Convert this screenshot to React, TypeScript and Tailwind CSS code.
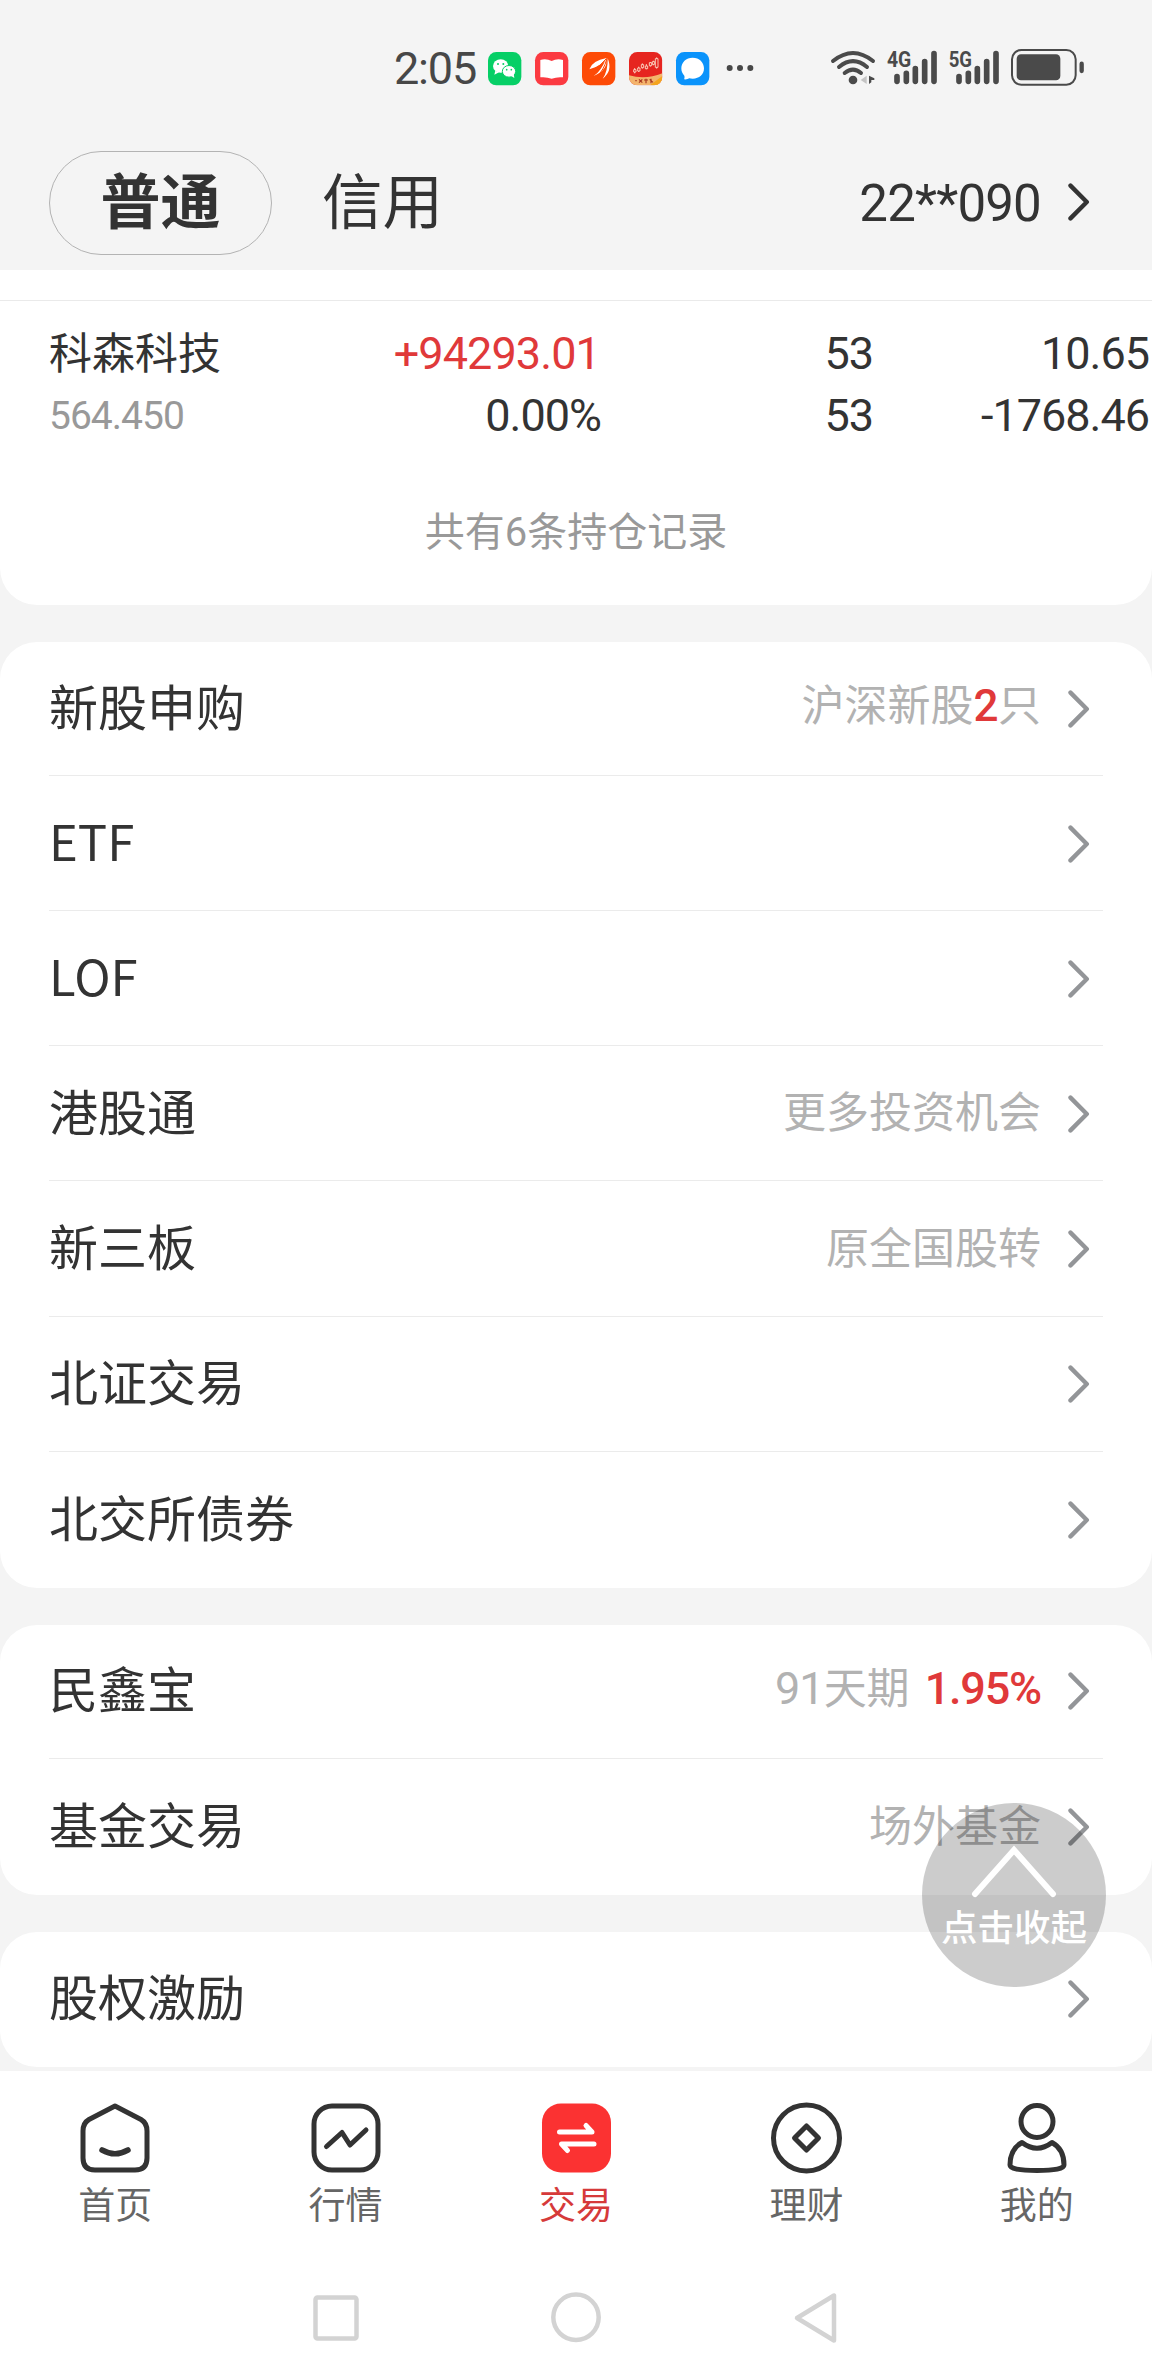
import type { ReactNode } from "react";

type MenuRow = {
    label: string;
    hint?: ReactNode;
};

const holding = {
    name: "科森科技",
    value: "564.450",
    cells: [
        { top: "+94293.01", bottom: "0.00%", width: "w-[300px]", topColor: "text-[#e0393a] tracking-[-0.9px] pr-px" },
        { top: "53", bottom: "53", width: "w-[272px]", topColor: "" },
        { top: "10.65", bottom: "-1768.46", width: "w-[276px]", topColor: "" },
    ],
};

const menuGroups: MenuRow[][] = [
    [
        { label: "新股申购", hint: <>沪深新股<span className="font-['Roboto'] text-[44px] font-medium leading-none tracking-[-0.5px] text-[#e0393a]">2</span>只</> },
        { label: "ETF" },
        { label: "LOF" },
        { label: "港股通", hint: "更多投资机会" },
        { label: "新三板", hint: "原全国股转" },
        { label: "北证交易" },
        { label: "北交所债券" },
    ],
    [
        {
            label: "民鑫宝",
            hint: (
                <>
                    <span className="font-['Roboto'] text-[45px] leading-none tracking-[-1px]">91</span>天期
                    <span className="ml-[15px] font-['Roboto'] text-[45px] font-medium leading-none tracking-[-1.2px] text-[#e0393a]">1.95%</span>
                </>
            ),
        },
        { label: "基金交易", hint: "场外基金" },
    ],
    [{ label: "股权激励" }],
];

const Chevron = ({ color }: { color: string }) => (
    <svg width="22" height="38" viewBox="0 0 22 38" fill="none" stroke={color} strokeWidth="4.4" strokeLinecap="round" strokeLinejoin="round">
        <path d="M2.5 2.6 18.8 19 2.5 35.4" />
    </svg>
);

const AppIcons = () => (
    <svg width="266" height="34" viewBox="0 0 798 102">
        {/* 微信 */}
        <rect x="0" y="0" width="100" height="100" rx="25" fill="#06cf66" />
        <ellipse cx="38" cy="42" rx="23" ry="20" fill="#fff" />
        <path d="M22 56l-3 12 14-7z" fill="#fff" />
        <ellipse cx="63" cy="58" rx="20" ry="17.500" fill="#fff" stroke="#06cf66" strokeWidth="3" />
        <path d="M70 72l9 6-2-12z" fill="#fff" />
        <circle cx="30" cy="36" r="3" fill="#06cf66" />
        <circle cx="46" cy="36" r="3" fill="#06cf66" />
        <circle cx="56" cy="53" r="2.500" fill="#06cf66" />
        <circle cx="70" cy="53" r="2.500" fill="#06cf66" />
        {/* 阅读 */}
        <rect x="141" y="0" width="100" height="100" rx="25" fill="#fb3a41" />
        <path d="M157 24q18-5 34 3 16-8 34-3v52q-18-2-34 4-16-6-34-4z" fill="#fff" />
        {/* 证券 */}
        <rect x="282" y="0" width="100" height="100" rx="25" fill="#fd4a06" />
        <path d="M304 52q8-26 52-34-10 22-52 34z" fill="#fff" />
        <path d="M317 72q22-14 37-52 8 32-37 52z" fill="#fff" />
        <path d="M344 80q16-22 15-61 16 38-15 61z" fill="#fff" />
        <path d="M309 56q28-12 46-36M326 74q22-20 30-52" stroke="#fd4a06" strokeWidth="3" fill="none" />
        {/* 行情 */}
        <clipPath id="quotes"><rect x="423" y="0" width="100" height="100" rx="25" /></clipPath>
        <g clipPath="url(#quotes)">
            <rect x="423" y="0" width="100" height="100" fill="#e6251f" />
            <path d="M423 70q50 14 100-6v36H423z" fill="#f3b46c" />
            <path d="M486 100l37-28v28z" fill="#f4a51e" />
            <path d="M440 48v16M452 44v16M463 34v16M475 36v16M487 30v14M496 26v14M506 16v34" stroke="#fde3cf" strokeWidth="2.500" />
            <path d="M437 53h7v7h-7zM449 48h7v9h-7zM460 38h7v9h-7zM472 42h7v8h-7zM484 32h7v9h-7zM493 29h7v8h-7zM502 20h8v26h-8z" fill="#e6251f" stroke="#fde3cf" strokeWidth="2.500" />
            <path d="M442 86h4M453 82l10 10M463 82l-10 10M468 84h12M474 80v14M485 82l10 9M489 80v14" stroke="#a8351e" strokeWidth="3.500" />
        </g>
        {/* 信息 */}
        <rect x="564" y="0" width="100" height="100" rx="25" fill="#0a93fb" />
        <path d="M614 17c20 0 34 14 34 32s-14 31-34 31c-4 0-7 0-10-1-5 3-10 4-16 3 2-4 2-7 1-11-6-6-9-13-9-22 0-18 14-32 34-32z" fill="#fff" />
        <g fill="#474747">
            <circle cx="725" cy="48" r="9" />
            <circle cx="756" cy="48" r="9" />
            <circle cx="787" cy="48" r="9" />
        </g>
    </svg>
);

const SignalIcons = () => (
    <svg width="300" height="80" viewBox="0 0 900 240" fill="none" stroke="#4a4a4a" strokeLinecap="round">
        <path d="M69 93Q129 45 189 93M87 111Q129 76 171 111M104 129Q129 109 153 129" strokeWidth="12" />
        <circle cx="129" cy="150" r="13" fill="#4a4a4a" stroke="none" />
        <path d="M170 137v25l-18-12z" fill="#c4c4c4" stroke="none" />
        <path d="M177 137v25l7-5v-7h9v-5z" fill="#4a4a4a" stroke="none" />
        <text x="231" y="111" textLength="73" lengthAdjust="spacingAndGlyphs" fill="#4a4a4a" stroke="none" className="font-['Roboto'] text-[68px] font-bold">4G</text>
        <path d="M261 140v14M289 130v24M316 116v38M344 95v59M372 71v83" strokeWidth="17" />
        <text x="416" y="111" textLength="70" lengthAdjust="spacingAndGlyphs" fill="#4a4a4a" stroke="none" className="font-['Roboto'] text-[68px] font-bold">5G</text>
        <path d="M447 140v14M475 130v24M502 116v38M530 95v59M558 71v83" strokeWidth="17" />
        <rect x="606" y="60" width="191" height="104" rx="28" strokeWidth="6" />
        <rect x="620" y="73" width="131" height="78" rx="13" fill="#4a4a4a" stroke="none" />
        <path d="M815 101v22" strokeWidth="13" />
    </svg>
);

const StatusBar = () => (
    <div className="flex h-[136px] items-center pl-[394px] text-[#474747]">
        <span className="w-[94px] pt-px font-['Roboto'] text-[45px] leading-none tracking-[-1.2px]">2:05</span>
        <div className="pt-[2px]">
            <AppIcons />
        </div>
        <div className="ml-auto mr-[42px] mt-1">
            <SignalIcons />
        </div>
    </div>
);

const AccountHeader = () => (
    <div className="flex h-[134px] items-start pl-[49px] pr-[62px] pt-[15px]">
        <div className="flex h-[104px] w-[223px] items-center justify-center rounded-full border border-[#b3b3b3] pb-2.5 text-[60px] font-bold leading-none">
            普通
        </div>
        <div className="ml-[50px] flex h-[104px] items-center pb-2.5 text-[60.5px] leading-none">信用</div>
        <div className="ml-auto flex h-[101px] items-center gap-[27px]">
            <span className="pt-[3px] font-['Roboto'] text-[51px] leading-none tracking-[-0.8px]">22**090</span>
            <Chevron color="#333333" />
        </div>
    </div>
);

const Holdings = () => (
    <section className="h-[335px] overflow-hidden rounded-b-[37px] bg-white pt-[30px]">
        <div className="flex h-[166px] border-t border-[#eaeaea] pl-[49px] pt-[22px]">
            <div className="w-[252px]">
                <div className="flex h-[62px] items-center pb-2 text-[43px] leading-none">{holding.name}</div>
                <div className="flex h-[62px] items-center pt-px font-['Roboto'] text-[39px] tracking-[-1px] text-[#999999]">{holding.value}</div>
            </div>
            {holding.cells.map((cell) => (
                <div key={cell.top} className={`${cell.width} shrink-0 text-right font-['Roboto'] text-[45px] leading-[62px] tracking-[-1px]`}>
                    <div className={cell.topColor}>{cell.top}</div>
                    <div>{cell.bottom}</div>
                </div>
            ))}
        </div>
        <p className="pt-[33px] text-center text-[40px] leading-[60px] text-[#999999]">
            共有<span className="font-['Roboto']">6</span>条持仓记录
        </p>
    </section>
);

const MenuCard = ({ rows }: { rows: MenuRow[] }) => (
    <section className="rounded-[37px] bg-white px-[49px]">
        {rows.map((row, index) => (
            <div key={row.label} className="h-[135.15px]">
                <div className={`flex h-[134px] items-center pr-[13px] ${index < rows.length - 1 ? "border-b border-[#ebebeb]" : ""}`}>
                    <span className="pb-[9px] text-[49px] leading-none">{row.label}</span>
                    <span className="ml-auto flex items-baseline whitespace-pre pb-2 text-[43px] leading-none text-[#b2b2b2]">{row.hint}</span>
                    <span className="ml-[27px]">
                        <Chevron color="#939598" />
                    </span>
                </div>
            </div>
        ))}
    </section>
);

const tabs = [
    {
        label: "首页",
        icon: (
            <>
                <path d="M36 4 62 17.500Q68 21 68 29V56Q68 68 56 68H16Q4 68 4 56V29Q4 21 10 17.500Z" />
                <path d="M23 48q13 7.500 26 0" strokeWidth="5.500" />
            </>
        ),
    },
    {
        label: "行情",
        icon: (
            <>
                <rect x="4" y="4" width="64" height="64" rx="18" />
                <path d="M16.500 44.500 32 30.500l8 12.500 16-15" />
            </>
        ),
    },
    {
        label: "交易",
        active: true,
        icon: (
            <>
                <rect x="2" y="1.500" width="69" height="69" rx="19" fill="#fb3232" stroke="none" />
                <path d="M19.500 30H52L46 23.500M54 42H21.500L27.500 48.500" stroke="#fff" />
            </>
        ),
    },
    {
        label: "理财",
        icon: (
            <>
                <circle cx="36.500" cy="36" r="33" />
                <path d="M36.500 24 48.500 36 36.500 48 24.500 36Z" />
            </>
        ),
    },
    {
        label: "我的",
        icon: (
            <>
                <circle cx="36" cy="19.500" r="16" />
                <path d="M21 40.500Q9 47 9 63 9 68.500 36 68.500T63 63Q63 47 51 40.500 36 52 21 40.500Z" />
            </>
        ),
    },
];

const TabBar = () => (
    <nav className="flex h-[189px] bg-white pt-[31px]">
        {tabs.map((tab) => (
            <div key={tab.label} className="flex flex-1 flex-col items-center">
                <svg width="72" height="72" viewBox="0 0 72 72" fill="none" stroke="#333333" strokeWidth="5" strokeLinecap="round" strokeLinejoin="round">
                    {tab.icon}
                </svg>
                <span className={`mt-2.5 text-[37px] leading-[38px] ${tab.active ? "text-[#d63a3a]" : "text-[#666666]"}`}>{tab.label}</span>
            </div>
        ))}
    </nav>
);

const SystemNav = () => (
    <div className="flex h-[116px] items-start justify-center gap-[190px] bg-white pt-8">
        <svg width="50" height="52" viewBox="0 0 50 52" fill="none" stroke="#d3d3d3" strokeWidth="4.5">
            <rect x="4.500" y="5.500" width="41" height="41" rx="2" />
        </svg>
        <svg width="50" height="52" viewBox="0 0 50 52" fill="none" stroke="#d3d3d3" strokeWidth="4.5">
            <circle cx="25" cy="25.300" r="22.700" />
        </svg>
        <svg width="50" height="52" viewBox="0 0 50 52" fill="none" stroke="#d3d3d3" strokeWidth="4.5" strokeLinejoin="round">
            <path d="M6 26 43 3.500V48.500Z" />
        </svg>
    </div>
);

const CollapseButton = () => (
    <button className="absolute left-[922px] top-[1802.5px] flex size-[184px] flex-col items-center rounded-full bg-black/20 pt-[40px] text-white">
        <svg width="90" height="60" viewBox="0 0 90 60" fill="none" stroke="#fff" strokeWidth="6" strokeLinecap="round">
            <path d="M6 51 45 7 84 51" />
        </svg>
        <span className="mt-px whitespace-nowrap text-[36.5px] font-medium leading-[44px]">点击收起</span>
    </button>
);

export default function App() {
    return (
        <div className="relative flex h-[2376px] w-[1152px] flex-col overflow-hidden bg-[#f4f4f4] font-['Noto_Sans_CJK_SC',sans-serif] text-[#333333]">
            <header>
                <StatusBar />
                <AccountHeader />
            </header>
            <main className="flex h-[1801px] flex-col gap-[37px]">
                <Holdings />
                {menuGroups.map((rows) => (
                    <MenuCard key={rows[0].label} rows={rows} />
                ))}
            </main>
            <TabBar />
            <SystemNav />
            <CollapseButton />
        </div>
    );
}
